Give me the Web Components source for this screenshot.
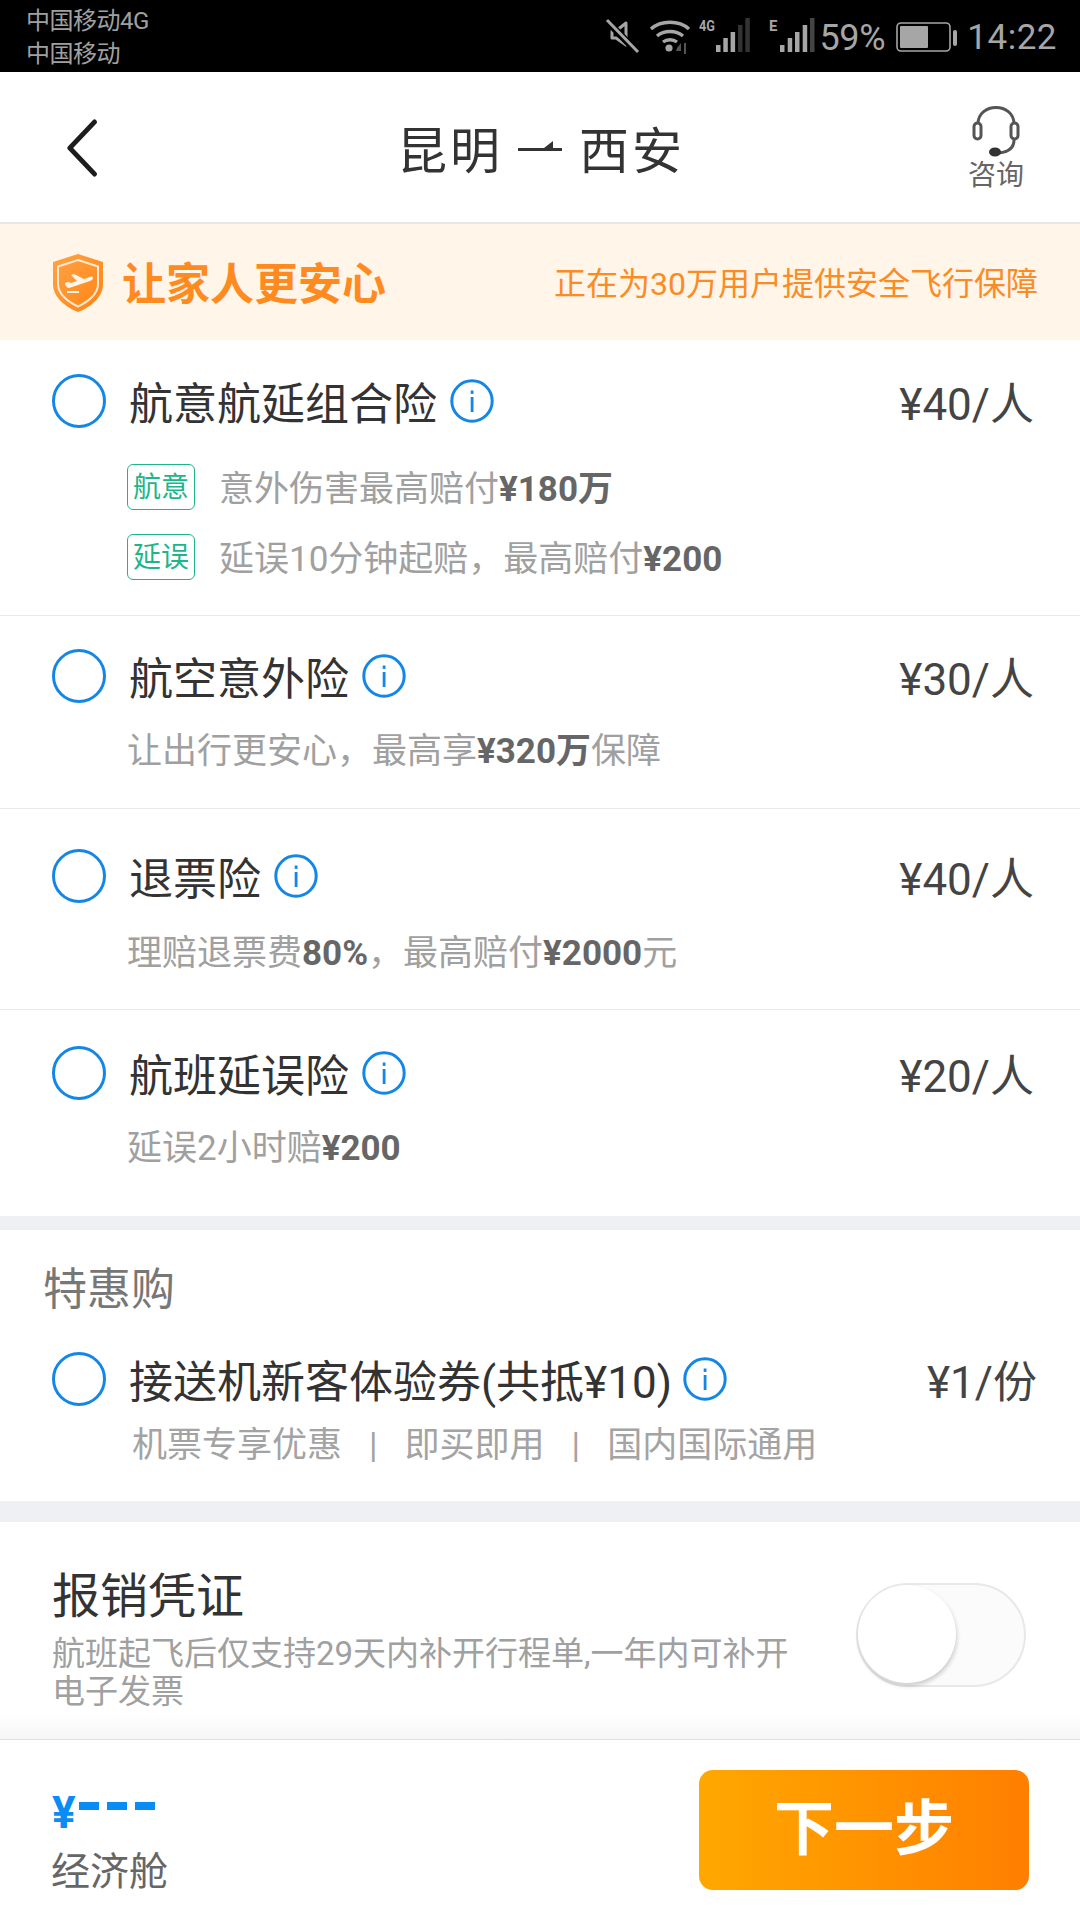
<!DOCTYPE html>
<html lang="zh">
<head>
<meta charset="utf-8">
<title>保险</title>
<style>
html, body { margin: 0; padding: 0; background: #fff; }
body { width: 1080px; height: 1920px; overflow: hidden; display: flex; flex-direction: column; font-family: Roboto, "Noto Sans CJK SC", sans-serif; }
b { font-weight: 700; color: #666; }
</style>
</head>
<body>
<status-bar></status-bar>
<nav-bar></nav-bar>
<safe-banner></safe-banner>

<ins-row name="航意航延组合险" price="¥40/人" style="--top:34px;--h:276px">
  <tag-line tag="航意" style="--mt:36px">意外伤害最高赔付<b>¥180万</b></tag-line>
  <tag-line tag="延误" style="--mt:24px">延误10分钟起赔，最高赔付<b>¥200</b></tag-line>
</ins-row>
<ins-row name="航空意外险" price="¥30/人" style="--top:33px;--h:193px;--sub:26px">
  <sub-line>让出行更安心，最高享<b>¥320万</b>保障</sub-line>
</ins-row>
<ins-row name="退票险" price="¥40/人" style="--top:40px;--h:201px;--sub:28px">
  <sub-line>理赔退票费<b>80%</b>，最高赔付<b>¥2000</b>元</sub-line>
</ins-row>
<ins-row name="航班延误险" price="¥20/人" style="--top:36px;--h:206px;--sub:26px" last>
  <sub-line>延误2小时赔<b>¥200</b></sub-line>
</ins-row>

<band-gap style="--h:14px"></band-gap>
<deal-section></deal-section>
<band-gap style="--h:21px"></band-gap>
<invoice-row></invoice-row>
<bottom-bar></bottom-bar>

<template id="info-tpl">
<svg width="44" height="44" viewBox="0 0 44 44" style="display:block;flex:none"><circle cx="22" cy="22" r="20.2" fill="none" stroke="#1487e6" stroke-width="3"/><rect x="20.7" y="11.5" width="2.8" height="3.4" fill="#1487e6"/><rect x="20.7" y="18" width="2.8" height="15" fill="#1487e6"/></svg>
</template>

<script>
class StatusBar extends HTMLElement {
    constructor() {
        super();
        this.attachShadow({ mode: 'open' }).innerHTML = `
<style>
:host { display: flex; flex: none; height: 72px; background: #000; color: #a6a6a6; justify-content: space-between; font-family: Roboto, "Noto Sans CJK SC", sans-serif; }
.left { padding: 5px 0 0 26px; font-size: 24px; line-height: 33px; color: #a0a0a0; letter-spacing: -0.5px; }
.right { position: relative; display: flex; align-items: center; padding-right: 23px; }
svg { display: block; flex: none; }
.pct { font-size: 36px; margin: 3px 11px 0 0; letter-spacing: -0.3px; }
.time { font-size: 35px; margin: 3px 0 0 9px; letter-spacing: .5px; }
</style>
<div class="left">中国移动4G<br>中国移动</div>
<div class="right">
  <svg width="36" height="36" viewBox="0 0 36 36" style="margin-right:8px">
    <path d="M7 13h4l10-8v22L11 20H7z" fill="none" stroke="#a6a6a6" stroke-width="3" stroke-linejoin="round"/>
    <path d="M2 3l30 31" stroke="#000" stroke-width="7"/><path d="M2 2l31 32" stroke="#a6a6a6" stroke-width="3"/>
  </svg>
  <svg width="42" height="36" viewBox="0 0 42 36" style="margin-right:8px">
    <g fill="none" stroke="#a6a6a6" stroke-width="3.4"><path d="M2 11c10-9 28-9 38 0"/><path d="M8 18c7-6 19-6 26 0"/><path d="M14 24c4-3 10-3 14 0"/></g>
    <circle cx="20" cy="30" r="3.6" fill="#a6a6a6"/><path d="M28 30l4-5v8h-5zM35 25h2v11h-2z" fill="#555"/>
  </svg>
  <svg width="54" height="36" viewBox="0 0 54 36">
    <text x="0" y="13" font-size="15" font-weight="700" font-family="Roboto" fill="#a6a6a6" textLength="16" lengthAdjust="spacingAndGlyphs">4G</text>
    <g fill="#a6a6a6"><rect x="17" y="27" width="4.500" height="7"/><rect x="24.300" y="20" width="4.500" height="14"/><rect x="31.600" y="14" width="4.500" height="20"/></g>
    <g fill="#333"><rect x="39" y="7" width="4.500" height="27"/><rect x="46.300" y="0" width="4.500" height="34"/></g>
  </svg>
  <svg width="50" height="36" viewBox="0 0 50 36" style="margin-left:16px">
    <text x="0" y="13" font-size="15" font-weight="700" font-family="Roboto" fill="#a6a6a6">E</text>
    <g fill="#a6a6a6"><rect x="11" y="27" width="4.500" height="7"/><rect x="18.700" y="20" width="4.500" height="14"/><rect x="26" y="14" width="4.500" height="20"/><rect x="33.700" y="7" width="4.500" height="27"/></g>
    <rect x="41" y="0" width="4.500" height="34" fill="#444"/>
  </svg>
  <span class="pct">59%</span>
  <svg width="62" height="30" viewBox="0 0 62 30" style="margin-top:2px">
    <rect x="1" y="1" width="53" height="28" rx="4" fill="none" stroke="#a6a6a6" stroke-width="1.6"/>
    <rect x="4" y="4" width="28" height="22" rx="1" fill="#a6a6a6"/>
    <rect x="57" y="8" width="4" height="16" rx="2" fill="#a6a6a6"/>
  </svg>
  <span class="time">14:22</span>
</div>`;
    }
}

class NavBar extends HTMLElement {
    constructor() {
        super();
        this.attachShadow({ mode: 'open' }).innerHTML = `
<style>
:host { display: grid; flex: none; grid-template-columns: 200px 1fr 200px; align-items: center; height: 152px; box-sizing: border-box; border-bottom: 2px solid #e7e7e7; background: #fff; }
.back { padding: 2px 0 0 65px; }
svg { display: block; }
.title { display: flex; justify-content: center; align-items: center; gap: 15px; font-size: 50px; color: #333; letter-spacing: 3px; padding-left: 2px; }
.help { justify-self: end; display: flex; flex-direction: column; align-items: center; padding: 0 56px 0 0; font-size: 28px; color: #666; line-height: 34px; }
.help svg { margin-bottom: 1px; }
</style>
<div class="back"><svg width="34" height="58" viewBox="0 0 34 58"><path d="M30 3L4 29l26 26" fill="none" stroke="#1d1d1d" stroke-width="5" stroke-linecap="round" stroke-linejoin="round" transform="matrix(.95 0 0 1 1 0)"/></svg></div>
<div class="title"><span>昆明</span><svg width="46" height="14" viewBox="0 0 46 14"><path d="M0 8h44v3H0zM26 8l9-7v7z" fill="#333"/></svg><span>西安</span></div>
<div class="help">
  <svg width="50" height="56" viewBox="0 0 50 56">
    <g fill="none" stroke="#555" stroke-width="3"><path d="M7 22C7 0 43 0 43 22"/><rect x="3" y="21" width="7" height="16" rx="3.500"/><rect x="40" y="21" width="7" height="16" rx="3.500"/><path d="M43 38c0 8-6 12-15 13"/></g>
    <ellipse cx="24" cy="50" rx="6" ry="4.500" fill="#333"/>
  </svg>
  <span>咨询</span>
</div>`;
    }
}

class SafeBanner extends HTMLElement {
    constructor() {
        super();
        this.attachShadow({ mode: 'open' }).innerHTML = `
<style>
:host { display: flex; flex: none; align-items: center; height: 116px; padding: 0 42px 0 52px; background: #fff5e8; color: #ff8a1f; font-family: Roboto, "Noto Sans CJK SC", sans-serif; }
svg { display: block; flex: none; margin-top: 1px; }
.head { font-size: 44px; font-weight: 700; margin: 0 0 2px 18px; }
.note { margin: 0 0 3px auto; font-size: 32px; color: #fb8b25; }
</style>
<svg width="52" height="60" viewBox="0 0 52 60">
  <defs><linearGradient id="sg" x1="0" y1="0" x2="1" y2="1"><stop offset="0" stop-color="#ffa347"/><stop offset="1" stop-color="#ff8413"/></linearGradient></defs>
  <path d="M26 1l25 8v22c0 13-12 23-25 28C13 54 1 44 1 31V9z" fill="url(#sg)"/>
  <path d="M26 7l20 6.500v17.500c0 10-10 18-20 22.500C16 49 6 41 6 31V13.500z" fill="none" stroke="#ffe9d2" stroke-width="2"/>
  <path d="M13 30l3-1 3 1 6-2-6-6 3-1 10 5 6-2c2-1 3 0 3 1s-1 2-3 3l-21 7c-2 0-4-3-4-5z" fill="#fff5e8"/>
  <rect x="15" y="38" width="12" height="2" fill="#fff5e8"/>
</svg>
<span class="head">让家人更安心</span>
<span class="note">正在为30万用户提供安全飞行保障</span>`;
    }
}

// radio + title + info + price, details go in the slot
class InsRow extends HTMLElement {
    constructor() {
        super();
        const name = this.getAttribute('name');
        const price = this.getAttribute('price');
        const shadow = this.attachShadow({ mode: 'open' });
        shadow.innerHTML = `
<style>
:host { display: block; flex: none; box-sizing: border-box; height: var(--h); padding: var(--top) 46px 0 52px; border-bottom: 1px solid #e9e9e9; background: #fff; color: #333; font-family: Roboto, "Noto Sans CJK SC", sans-serif; }
:host([last]) { border-bottom: none; }
.top { display: flex; align-items: center; height: 54px; }
.radio { flex: none; width: 54px; height: 54px; box-sizing: border-box; border: 3px solid #1487e6; border-radius: 50%; margin-right: 23px; }
.name { font-size: 44px; margin-right: 13px; }
.price { margin-left: auto; font-size: 44px; color: #444; }
.info { flex: none; }
.body { padding-left: 75px; }
</style>
<div class="top">
  <span class="radio"></span>
  <span class="name">${name}</span>
  <span class="info"></span>
  <span class="price">${price}</span>
</div>
<div class="body"><slot></slot></div>`;
        shadow.querySelector('.info').append(document.getElementById('info-tpl').content.cloneNode(true));
    }
}

class TagLine extends HTMLElement {
    constructor() {
        super();
        this.attachShadow({ mode: 'open' }).innerHTML = `
<style>
:host { display: flex; align-items: center; height: 46px; margin-top: var(--mt); font-size: 35px; color: #a0a0a0; font-family: Roboto, "Noto Sans CJK SC", sans-serif; }
.tag { flex: none; width: 68px; height: 46px; box-sizing: border-box; border: 1px solid #1fb58a; border-radius: 6px; color: #1fb58a; font-size: 28px; text-align: center; line-height: 46px; margin-right: 24px; }
.txt { margin-bottom: 3px; }
</style>
<span class="tag">${this.getAttribute('tag')}</span><span class="txt"><slot></slot></span>`;
    }
}

class SubLine extends HTMLElement {
    constructor() {
        super();
        this.attachShadow({ mode: 'open' }).innerHTML = `
<style>
:host { display: block; margin: var(--sub) 0 0 0; font-size: 35px; line-height: 46px; color: #a0a0a0; font-family: Roboto, "Noto Sans CJK SC", sans-serif; }
</style>
<slot></slot>`;
    }
}

class BandGap extends HTMLElement {
    constructor() {
        super();
        this.attachShadow({ mode: 'open' }).innerHTML = `<style>:host { display: block; flex: none; height: var(--h); background: #eff0f3; }</style>`;
    }
}

class DealSection extends HTMLElement {
    constructor() {
        super();
        const shadow = this.attachShadow({ mode: 'open' });
        shadow.innerHTML = `
<style>
:host { display: block; flex: none; box-sizing: border-box; height: 271px; padding: 34px 43px 0 43px; background: #fff; color: #333; font-family: Roboto, "Noto Sans CJK SC", sans-serif; }
.label { font-size: 44px; line-height: 52px; color: #777; }
.top { display: flex; align-items: center; height: 54px; margin-top: 36px; }
.radio { flex: none; width: 54px; height: 54px; box-sizing: border-box; border: 3px solid #1487e6; border-radius: 50%; margin: 0 23px 0 9px; }
.name { font-size: 44px; margin-right: 11px; }
.price { margin-left: auto; font-size: 44px; color: #444; }
.perks { display: flex; gap: 27px; margin: 17px 0 0 89px; font-size: 35px; line-height: 46px; color: #a3a3a3; }
</style>
<div class="label">特惠购</div>
<div class="top">
  <span class="radio"></span>
  <span class="name">接送机新客体验券(共抵¥10)</span>
  <span class="info"></span>
  <span class="price">¥1/份</span>
</div>
<div class="perks"><span>机票专享优惠</span><span>|</span><span>即买即用</span><span>|</span><span>国内国际通用</span></div>`;
        shadow.querySelector('.info').append(document.getElementById('info-tpl').content.cloneNode(true));
    }
}

class InvoiceRow extends HTMLElement {
    constructor() {
        super();
        this.attachShadow({ mode: 'open' }).innerHTML = `
<style>
:host { display: flex; flex: none; box-sizing: border-box; height: 218px; padding: 47px 54px 0 52px; justify-content: space-between; background: linear-gradient(#fff 0, #fff 190px, #f6f6f7 217px); border-bottom: 1px solid #dedede; color: #333; font-family: Roboto, "Noto Sans CJK SC", sans-serif; }
.text { width: 760px; }
.name { font-size: 48px; line-height: 56px; }
.desc { margin-top: 10px; font-size: 33px; line-height: 38px; color: #a0a0a0; }
.switch { position: relative; flex: none; width: 170px; height: 104px; margin-top: 14px; box-sizing: border-box; background: #fbfbfb; border: 2px solid #e8e8e8; border-radius: 52px; }
.knob { position: absolute; left: 0; top: 0; width: 98px; height: 98px; border-radius: 50%; background: #fff; box-shadow: 1px 3px 4px rgba(0,0,0,.18); }
</style>
<div class="text">
  <div class="name">报销凭证</div>
  <div class="desc">航班起飞后仅支持29天内补开行程单,一年内可补开电子发票</div>
</div>
<div class="switch"><div class="knob"></div></div>`;
    }
}

class BottomBar extends HTMLElement {
    constructor() {
        super();
        this.attachShadow({ mode: 'open' }).innerHTML = `
<style>
:host { display: flex; flex: none; box-sizing: border-box; height: 179px; padding: 0 51px 0 52px; align-items: flex-start; justify-content: space-between; background: #fff; font-family: Roboto, "Noto Sans CJK SC", sans-serif; }
.money { margin-top: 48px; color: #0a8cf5; font-weight: 700; font-size: 44px; line-height: 50px; display: flex; }
.dashes { display: flex; gap: 8px; margin: 14px 0 0 3px; }
.dashes i { display: block; width: 20px; height: 8px; background: #0a8cf5; }
.cabin { margin: 10px 0 0 -1px; font-size: 39px; line-height: 48px; color: #666; }
.next { margin-top: 30px; width: 330px; height: 120px; border-radius: 14px; background: linear-gradient(90deg, #ffa800, #ff7f00); color: #fff; font-size: 60px; font-weight: 700; line-height: 120px; text-align: center; }
</style>
<div>
  <div class="money"><span>¥</span><span class="dashes"><i></i><i></i><i></i></span></div>
  <div class="cabin">经济舱</div>
</div>
<div class="next">下一步</div>`;
    }
}

customElements.define('status-bar', StatusBar);
customElements.define('nav-bar', NavBar);
customElements.define('safe-banner', SafeBanner);
customElements.define('ins-row', InsRow);
customElements.define('tag-line', TagLine);
customElements.define('sub-line', SubLine);
customElements.define('band-gap', BandGap);
customElements.define('deal-section', DealSection);
customElements.define('invoice-row', InvoiceRow);
customElements.define('bottom-bar', BottomBar);
</script>
</body>
</html>
